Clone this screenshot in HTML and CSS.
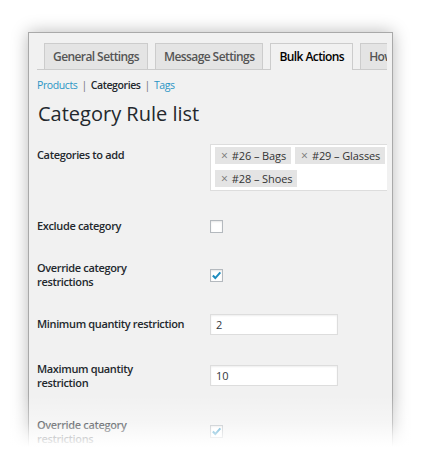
FILE: index.html
```html
<!DOCTYPE html>
<html>
<head>
<meta charset="utf-8">
<link rel="stylesheet" href="styles.css">
</head>
<body>
<div class="stage">
  <div class="panel">
    <div class="clip">
      <nav class="tabs">
        <span class="tab">General Settings</span>
        <span class="tab">Message Settings</span>
        <span class="tab active">Bulk Actions</span>
        <span class="tab">How to use</span>
      </nav>
      <div class="subnav"><a class="link">Products</a><span class="sep">|</span><b class="current">Categories</b><span class="sep">|</span><a class="link">Tags</a></div>
      <h1 class="title">Category Rule list</h1>
      <div class="form">
        <div class="row r1">
          <div class="label">Categories to add</div>
          <div class="field">
            <div class="select">
              <span class="tag"><span class="x">×</span>#26 – Bags</span>
              <span class="tag"><span class="x">×</span>#29 – Glasses</span>
              <span class="tag"><span class="x">×</span>#28 – Shoes</span>
            </div>
          </div>
        </div>
        <div class="row r2">
          <div class="label">Exclude category</div>
          <div class="field"><span class="check"></span></div>
        </div>
        <div class="row r3">
          <div class="label">Override category<br>restrictions</div>
          <div class="field"><span class="check"><svg class="tick" viewBox="0 0 12 12" width="11" height="11"><path d="M2 6 L4.7 8.8 L10.2 2.6" fill="none" stroke="#1e8cbe" stroke-width="2.2"/></svg></span></div>
        </div>
        <div class="row r4">
          <div class="label">Minimum quantity restriction</div>
          <div class="field"><div class="input">2</div></div>
        </div>
        <div class="row r5">
          <div class="label">Maximum quantity<br>restriction</div>
          <div class="field"><div class="input">10</div></div>
        </div>
        <div class="row r6">
          <div class="label">Override category<br>restrictions</div>
          <div class="field"><span class="check"><svg class="tick" viewBox="0 0 12 12" width="11" height="11"><path d="M2 6 L4.7 8.8 L10.2 2.6" fill="none" stroke="#1e8cbe" stroke-width="2.2"/></svg></span></div>
        </div>
      </div>
    </div>
  </div>
  <div class="fade"></div>
</div>
</body>
</html>
```

FILE: styles.css
```css
html, body {
  margin: 0;
  padding: 0;
  background: #fff;
  overflow: hidden;
}
body {
  font-family: "Open Sans", "Noto Sans", sans-serif;
  color: #23282d;
}
.stage {
  position: relative;
  height: 470px;
  padding: 32px 0 0 28px;
  box-sizing: border-box;
  overflow: hidden;
}
.panel {
  width: 365px;
  height: 438px;
  box-sizing: border-box;
  background: #f1f1f1;
  border: 1px solid #a9a9a9;
  box-shadow: 0 0 16px rgba(0, 0, 0, 0.28);
  padding: 0 5px 0 8px;
}
.clip {
  overflow: hidden;
  height: 100%;
}
.tabs {
  display: flex;
  gap: 7px;
  padding: 10px 0 0 7px;
  border-bottom: 1px solid #ccc;
  white-space: nowrap;
}
.tab {
  flex: none;
  height: 26px;
  box-sizing: border-box;
  padding: 4px 8px 0;
  border: 1px solid #ccc;
  border-bottom: none;
  background: #e4e4e4;
  color: #555;
  font-size: 12px;
  font-weight: 600;
  letter-spacing: -0.58px;
  line-height: 18px;
}
.tab.active {
  background: #f1f1f1;
  color: #000;
  height: 27px;
  margin-bottom: -1px;
}
.subnav {
  margin-top: 7px;
  font-size: 10.5px;
  letter-spacing: -0.4px;
  line-height: 16px;
  color: #666;
}
.link {
  color: #2a95c5;
}
.current {
  color: #23282d;
  font-weight: 600;
}
.sep {
  margin: 0 4px;
  color: #777;
}
.title {
  margin: 8px 0 0 1px;
  font-size: 20px;
  font-weight: 400;
  line-height: 26px;
  color: #23282d;
}
.form {
  margin-top: 17px;
}
.row {
  display: flex;
  align-items: flex-start;
}
.label {
  width: 173px;
  flex: none;
  font-size: 11px;
  font-weight: 600;
  letter-spacing: -0.35px;
  line-height: 14px;
  color: #23282d;
  white-space: nowrap;
}
.field {
  flex: none;
}
.r1 .label { padding-top: 4px; }
.r2 { margin-top: 28px; }
.r2 .field { padding-top: 1px; }
.r3 { margin-top: 28px; }
.r3 .field { padding-top: 8px; }
.r4 { margin-top: 25px; }
.r4 .label { padding-top: 3px; }
.r5 { margin-top: 27px; }
.r5 .field { padding-top: 3px; }
.r6 { margin-top: 28px; }
.r6 .field { padding-top: 7px; }

.select {
  width: 190px;
  box-sizing: border-box;
  display: flex;
  flex-wrap: wrap;
  column-gap: 4px;
  row-gap: 6px;
  padding: 2px 4px 3px;
  border: 1px solid #ddd;
  background: #fff;
}
.tag {
  height: 17px;
  padding: 0 5px 0 6px;
  background: #e4e4e4;
  font-size: 11px;
  letter-spacing: -0.1px;
  line-height: 17px;
  color: #333;
  white-space: nowrap;
}
.x {
  color: #777;
  font-size: 12px;
  margin-right: 4px;
}
.check {
  display: flex;
  align-items: center;
  justify-content: center;
  width: 13px;
  height: 13px;
  box-sizing: border-box;
  border: 1px solid #b4b9be;
  background: #fff;
  box-shadow: inset 0 1px 2px rgba(0, 0, 0, 0.1);
}
.tick {
  display: block;
}
.input {
  width: 128px;
  height: 21px;
  box-sizing: border-box;
  border: 1px solid #ddd;
  background: #fff;
  box-shadow: inset 0 1px 2px rgba(0, 0, 0, 0.07);
  padding: 0 5px;
  font-size: 11px;
  line-height: 19px;
  color: #32373c;
}
.fade {
  position: absolute;
  left: 0;
  right: 0;
  top: 395px;
  bottom: 0;
  background: linear-gradient(rgba(255,255,255,0) 0px, rgba(255,255,255,0.35) 28px, rgba(255,255,255,0.75) 41px, #fff 52px);
}
```
